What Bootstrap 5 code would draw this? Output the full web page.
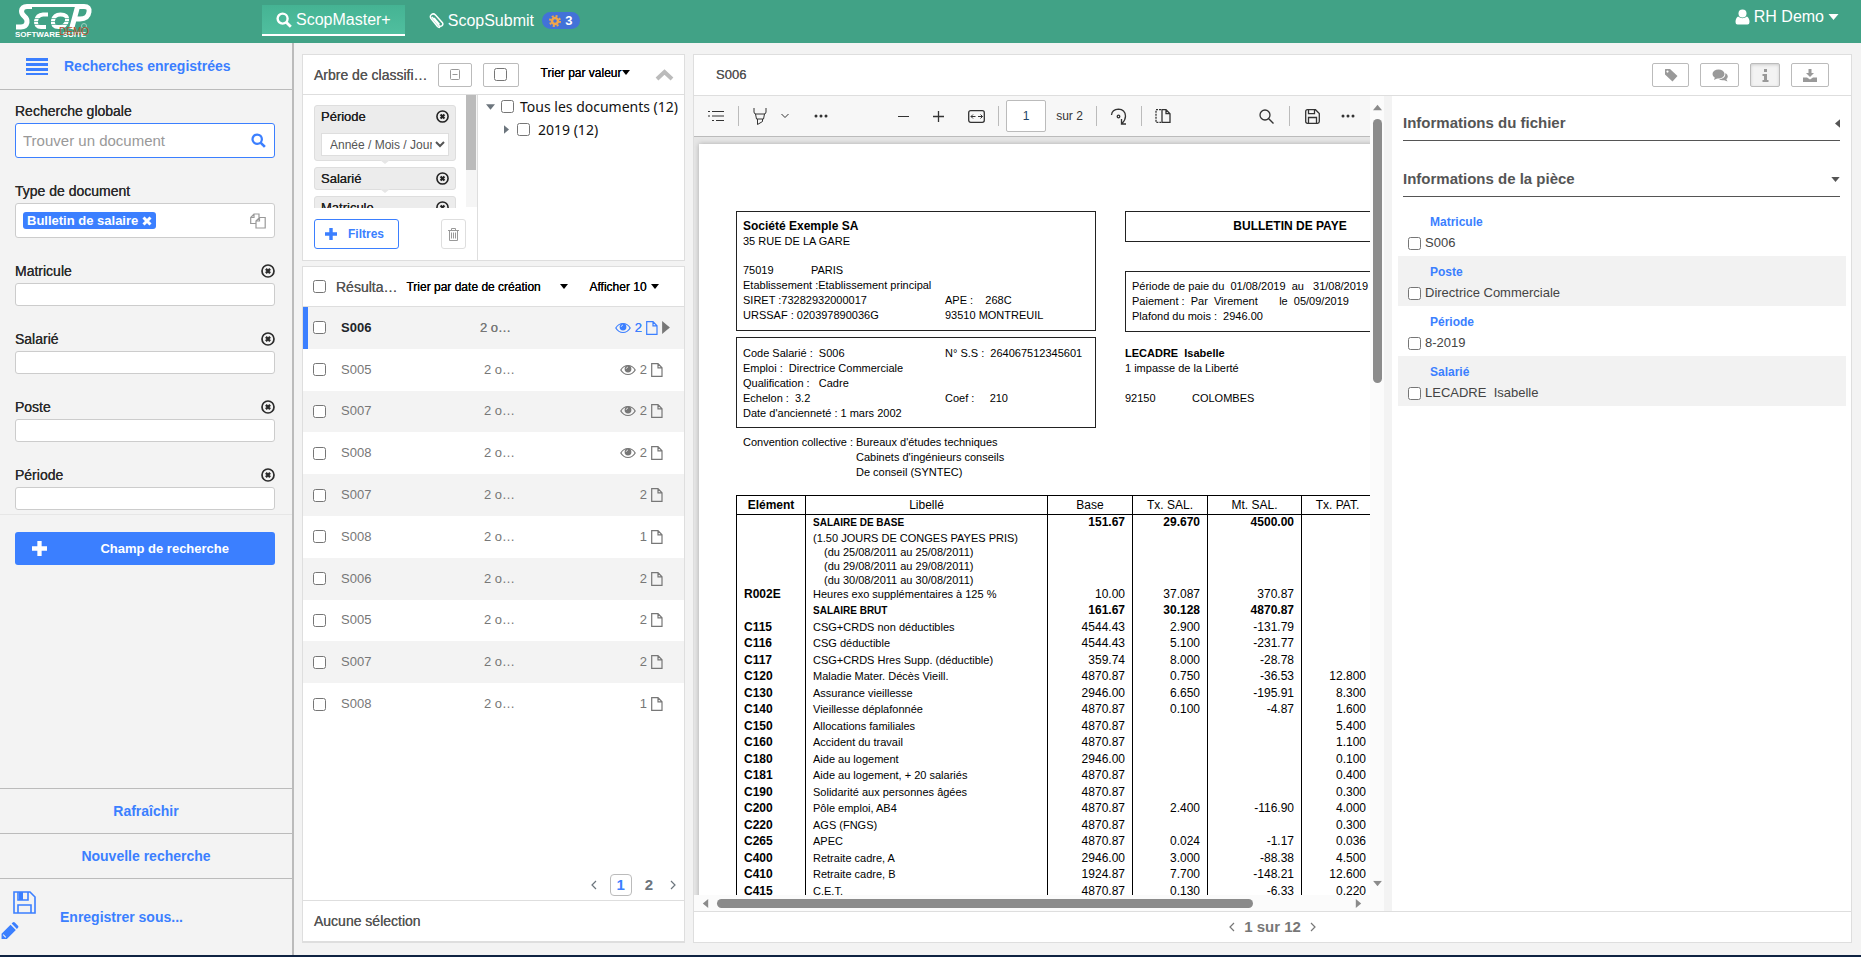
<!DOCTYPE html>
<html lang="fr">
<head>
<meta charset="utf-8">
<meta name="viewport" content="width=device-width, initial-scale=1">
<title>ScopMaster+</title>
<link href="https://cdn.jsdelivr.net/npm/bootstrap@5.3.0/dist/css/bootstrap.min.css" rel="stylesheet">
<style>
:root{--blue:#3b7fff;--line:#dedede;--side:#f3f3f3}
body{font-family:"Liberation Sans",Arial,sans-serif;font-size:14px;line-height:20px;color:#333;background:var(--side)}
svg{display:block;flex:none}
svg:not([fill]){fill:currentColor}
a{text-decoration:none;color:inherit}
.app{height:100vh;border-bottom:2px solid #0f2342}
.semi{text-shadow:0 0 0 currentColor}
.fs12{font-size:12px}.fs13{font-size:13px}.fs15{font-size:15px}.fs16{font-size:16px}
.blue{color:var(--blue)}
input[type=checkbox]{margin:0;width:13px;height:13px;flex:none}
.plain{background:none;border:0;padding:0;color:inherit}

/* top bar */
.topbar{background:#41a286;height:43px;color:#fff;padding:0 22px 0 14px}
.topbar .brand{width:248px}
.tab-on{background:linear-gradient(#45b393,#50bf9f);border-bottom:2px solid #fff;height:31px;padding:0 14px;margin-top:5px}
.tab-off{height:31px;margin-top:5px;padding:0 24px}
.count{background:#4272d8;border-radius:9px;height:17px;width:38px;font-size:13px}

/* sidebar */
.sidebar{width:294px;border-right:2px solid #bbb}
.side-head{height:47px;border-bottom:1px solid #bbb;padding-left:26px;gap:16px}
.side-body{padding:9px 17px 4px 15px;border-bottom:1px solid #e6e6e6}
.side-body .fld{border:1px solid #ccc;border-radius:3px;background:#fff;width:100%;padding:0 8px}
.fld.big{height:35px}
.side-body .fld.focus{border-color:var(--blue);padding-left:7px}
.fld input{border:0;outline:0;background:none;min-width:0;width:0;padding:0}
.fld input::placeholder{color:#999;opacity:1}
.side-body input.fld{height:23px;display:block;outline:0}
.lab{height:24px;line-height:24px;color:#2b2b2b}
.field-gap{margin-top:21px}
.tagx{background:var(--blue);color:#fff;border-radius:3px;height:17px;padding:0 4px;font-size:13px;font-weight:bold;margin-left:-1px;white-space:nowrap;flex:none}
.addfield{background:var(--blue);color:#fff;height:33px;border:0;border-radius:3px;margin:17px 17px 0 15px;padding:0 46px 0 17px;font-size:13px}
.side-act{height:45px;border:0;border-top:1px solid #bbb;background:none;color:var(--blue);font-weight:bold}
.side-save{height:77px;border-top:1px solid #bbb}

/* panels */
.panel{background:#fff;border:1px solid var(--line)}
.mid{width:383px}
.phead{height:40px;border-bottom:1px solid var(--line);color:#555}
.sqbtn{height:24px;border:1px solid #bbb;border-radius:2px;background:#fff;color:#999;padding:0;display:flex;align-items:center;justify-content:center;flex:none}
.sqbtn.on{background:#f3f3f3;box-shadow:inset 0 1px 3px #ccc}
.filters{width:175px;border-right:1px solid var(--line);height:165px;flex:none}
.fscroll{height:113px;overflow:hidden}
.fbox{position:relative;width:142px;background:#ececec;border:1px solid #dedede;border-radius:3px;padding:0 6px;color:#222;margin-bottom:6px}
.fbox:after{content:"";position:absolute;left:65px;top:100%;border:5px solid transparent;border-top:4px solid #e6e6e6;border-bottom:0}
.fbox .ttl{height:21px}
.fbox select{width:128px;height:23px;border:1px solid #dedede;background:#fff;color:#555;font-size:12px;padding:0 0 0 4px;margin:6px 0 4px;display:block}
.thumb{width:10px;height:75px;background:#bbb}
.track{width:11px;background:#f5f5f5;height:112px}
.filt{width:85px;height:30px;padding:0 14px 0 10px;--bs-btn-color:#3b7fff;--bs-btn-border-color:#3b7fff;border-radius:3px}
.trash{width:25px;height:30px;border-color:var(--line);border-radius:3px}
.tree{font-family:"Noto Sans",Tahoma,sans-serif;line-height:23px;color:#111;white-space:nowrap}
.results{height:418px;color:#777;font-size:13px}
.results td{padding:0;vertical-align:middle}
.results tr:nth-child(odd){background:var(--side)}
.results tr.sel td:first-child{box-shadow:inset 5px 0 var(--blue)}
.pg{width:22px;height:22px;border:1px solid #bbb;border-radius:4px;line-height:20px;text-align:center}

/* document viewer */
.pdf{min-width:0}
.ptool{height:41px;background:#f7f7f7;border-bottom:1px solid #bbb;color:#333}
.ptool .sep{width:1px;height:20px;background:#bbb}
.ptool input{width:40px;height:32px;border:1px solid #bbb;border-radius:2px;text-align:center;font-size:12px;color:#246;padding:0}
.ptool svg{fill:none;stroke:currentColor}
.canvas{background:#e6e6e6;padding:7px 0 0 5px;overflow:hidden;min-height:0}
.sheet{background:#fff;width:900px;min-height:900px;padding:67px 0 0 37px;box-shadow:0 0 5px #aaa;color:#000;font-size:11px;line-height:15px}
.sheet .cols{display:grid;grid-template-columns:360px 420px;column-gap:29px}
.bx{border:1px solid #222;padding:7px 6px 0;white-space:pre}
.two{display:grid;grid-template-columns:202px 1fr}
.pay{width:880px;table-layout:fixed;border:1px solid #000;border-bottom:0;font-size:12px;line-height:14px;margin-top:15px}
.pay td,.pay th{padding:0 7px;border-left:1px solid #000;vertical-align:top;text-align:right}
.pay thead tr{height:19px}
.pay thead th{border-bottom:1px solid #000;text-align:center;font-weight:normal;vertical-align:middle}
.pay tbody tr{height:16px}
.pay tbody tr:nth-child(even){height:17px}
.pay td:nth-child(1){text-align:left;font-weight:bold}
.pay td:nth-child(2){text-align:left;font-size:11px}
.pay td:nth-child(2) b{font-size:10px}
.vbar{width:14px;background:#fbfbfb;color:#8b8b8b;flex:none}
.vbar i,.hbar i{background:#8b8b8b;border-radius:5px;display:block}
.vbar i{width:9px;height:264px}
.hbar{height:16px;background:#fbfbfb;color:#8b8b8b;padding:0 22px 0 8px}
.hbar i{height:9px;width:85%}
.info{width:467px;border-left:8px solid var(--side);padding:5px 5px 0 6px}
.ihead{height:40px;border-bottom:1px solid #555;margin:0 6px 0 5px;padding-top:5px;color:#555;font-weight:bold;font-size:15px}
.irow{height:50px;padding:6px 10px 0}
.irow:nth-of-type(even){background:#f2f2f2}
.irow .k{padding-left:22px;font-size:12px;font-weight:bold;color:var(--blue)}
.irow label{font-size:13px;color:#444;height:22px;white-space:pre}
</style>
</head>
<body>
<svg width="0" height="0" class="position-absolute" aria-hidden="true">
<symbol id="x" viewBox="0 0 14 14"><circle cx="7" cy="7" r="6" fill="none" stroke="currentColor" stroke-width="1.7"/><path d="M4.9 4.9l4.2 4.2M9.1 4.9L4.9 9.1" stroke="currentColor" stroke-width="2.3"/></symbol>
<symbol id="mag" viewBox="0 0 16 16"><circle cx="6.6" cy="6.6" r="5" fill="none" stroke="currentColor" stroke-width="2.4"/><path d="M10.2 10.2l4.6 4.6" stroke="currentColor" stroke-width="2.8"/></symbol>
<symbol id="plus" viewBox="0 0 14 14"><path d="M5 0h4v5h5v4H9v5H5V9H0V5h5z"/></symbol>
<symbol id="eye" viewBox="0 0 16 12"><path d="M.8 6C2.6 3 5 1.500 8 1.500S13.400 3 15.200 6C13.400 9 11 10.500 8 10.500S2.600 9 .8 6z" fill="none" stroke="currentColor" stroke-width="1.200"/><circle cx="8" cy="5" r="3.400"/><path d="M6.300 4.800C6.300 3.800 7 3.200 8 3.200" fill="none" stroke="#fff" stroke-width=".8"/></symbol>
<symbol id="file" viewBox="0 0 12 14"><path d="M.7.700H7L11 4.800V13.300H.7zM7 .7V4.800H11" fill="none" stroke="currentColor" stroke-width="1.200"/></symbol>
<symbol id="down" viewBox="0 0 10 6"><path d="M0 0h10L5 6z"/></symbol>
<symbol id="right" viewBox="0 0 6 10"><path d="M0 0v10l6-5z"/></symbol>
<symbol id="left" viewBox="0 0 6 10"><path d="M6 0v10L0 5z"/></symbol>
<symbol id="lt" viewBox="0 0 6 10"><path d="M5 1L1 5l4 4" fill="none" stroke="currentColor" stroke-width="1.200"/></symbol>
<symbol id="gt" viewBox="0 0 6 10"><path d="M1 1l4 4-4 4" fill="none" stroke="currentColor" stroke-width="1.200"/></symbol>
</svg>

<div class="app d-flex flex-column overflow-hidden">
<header class="topbar d-flex align-items-start flex-shrink-0">
  <a href="#" class="brand" aria-label="Scop Software Suite">
    <svg width="80" height="40" viewBox="0 0 80 40" font-family="Liberation Sans" fill="none" stroke="#fff">
      <path d="M14 5.500H68" stroke-width="3"/>
      <path d="M18 6.500H13Q8 6.500 7.500 11 7.500 14 10.500 16.500 13.500 19 13 22.500 12 27 7 27H2" stroke-width="5"/>
      <path d="M34 14.500H29Q23 15 22 21 21.500 27 27 27H32M46.500 14.500Q54 14.500 53 20.500 52 27 44.500 27 38 27 39 20.500 40 14.500 46.500 14.500" stroke-width="4"/>
      <path d="M20 18.500h10M20 21.500h10M20 24.500h10M37 18.500h18M37 21.500h18M37 24.500h18" stroke="#41a286" stroke-width=".7"/>
      <path d="M64 5L57.500 29M61 6.500H70Q76 6.500 75 12 74 19 66 19H60" stroke-width="5"/>
      <circle cx="70" cy="26" r="2.500" stroke="#9fd0c2"/>
      <text x="1" y="37" font-size="8" font-weight="bold" fill="#fff" stroke="none">SOFTWARE SUITE</text>
      <text x="45" y="35" font-size="10" fill="#b5512f" stroke="none">DEMO</text>
    </svg>
  </a>
  <nav class="d-flex fs16">
    <a href="#" class="tab-on d-flex align-items-center gap-1"><svg width="16" height="16"><use href="#mag"/></svg>ScopMaster+</a>
    <a href="#" class="tab-off d-flex align-items-center gap-1">
      <svg width="15" height="16" viewBox="0 0 15 16" fill="none" stroke="#fff" stroke-width="1.500"><path d="M3 4l7 8.500q1.500 1.500 3 .2t.4-3L6.500 2Q4.500 0 2.500 1.500T2 5.500l6.500 8Q10 15 11 14M5 5l5.500 6.500"/></svg>
      ScopSubmit
      <span class="count d-flex align-items-center justify-content-center gap-1 fw-bold ms-1"><svg width="12" height="12" viewBox="0 0 12 12"><circle cx="6" cy="6" r="3" fill="none" stroke="#efa54a" stroke-width="2.500"/><circle cx="6" cy="6" r="5" fill="none" stroke="#efa54a" stroke-width="2" stroke-dasharray="2 1.930"/></svg>3</span>
    </a>
  </nav>
  <button class="plain ms-auto d-flex align-items-center gap-1 fs16" style="margin-top:7px">
    <svg width="15" height="16" viewBox="0 0 14 16"><circle cx="7" cy="4.500" r="4"/><path d="M2.500 7.500Q7 11 11.500 7.500 14 9 14 13q0 2.500-2 2.500H2q-2 0-2-2.500 0-4 2.500-5.500z"/></svg>
    RH Demo <svg width="11" height="6"><use href="#down"/></svg>
  </button>
</header>

<div class="d-flex flex-fill overflow-hidden">
<aside class="sidebar d-flex flex-column flex-shrink-0">
  <a href="#" class="side-head d-flex align-items-center blue fw-bold">
    <svg width="22" height="17" viewBox="0 0 22 17"><path d="M0 0h22v3H0zM0 5h22v3H0zM0 10h22v3H0zM0 15h22v2H0z"/></svg>Recherches enregistrées
  </a>
  <div class="side-body">
    <label class="lab semi d-block" for="q">Recherche globale</label>
    <div class="fld big focus d-flex align-items-center"><input id="q" class="flex-grow-1 fs15" placeholder="Trouver un document"><svg class="blue" width="15" height="15"><use href="#mag"/></svg></div>
    <label class="lab semi d-block field-gap" for="type">Type de document</label>
    <div class="fld big d-flex align-items-center"><span class="tagx d-flex align-items-center gap-1">Bulletin de salaire <svg width="10" height="10" viewBox="0 0 10 10"><path d="M1.500 1.500l7 7M8.500 1.500l-7 7" stroke="#fff" stroke-width="3"/></svg></span><input id="type" class="flex-grow-1"><svg width="16" height="16" viewBox="0 0 16 16" fill="none" stroke="#999" stroke-width="1.200"><path d="M6 10.500H.7V4.500L4 1h5v3.500M4 1v3.500H.7M6 8l3.500-3.500h5.700v10.500H6zM9.500 4.500V8H6"/></svg></div>
    <div class="field-gap d-flex justify-content-between lab semi"><label for="f1">Matricule</label><button class="plain" aria-label="Retirer Matricule"><svg width="14" height="14"><use href="#x"/></svg></button></div>
    <input id="f1" class="fld">
    <div class="field-gap d-flex justify-content-between lab semi"><label for="f2">Salarié</label><button class="plain" aria-label="Retirer Salarié"><svg width="14" height="14"><use href="#x"/></svg></button></div>
    <input id="f2" class="fld">
    <div class="field-gap d-flex justify-content-between lab semi"><label for="f3">Poste</label><button class="plain" aria-label="Retirer Poste"><svg width="14" height="14"><use href="#x"/></svg></button></div>
    <input id="f3" class="fld">
    <div class="field-gap d-flex justify-content-between lab semi"><label for="f4">Période</label><button class="plain" aria-label="Retirer Période"><svg width="14" height="14"><use href="#x"/></svg></button></div>
    <input id="f4" class="fld">
  </div>
  <button class="addfield d-flex align-items-center justify-content-between fw-bold"><svg width="15" height="15"><use href="#plus"/></svg>Champ de recherche</button>
  <button class="side-act mt-auto">Rafraîchir</button>
  <button class="side-act">Nouvelle recherche</button>
  <a href="#" class="side-save d-flex align-items-center blue fw-bold">
    <span class="d-block align-self-start pt-2">
      <svg class="mt-1" style="margin-left:13px" width="23" height="23" viewBox="0 0 23 23"><path d="M1 1h16l5 5v16H1zM5 22v-8h13v8M5 1v8h10V1" fill="none" stroke="currentColor" stroke-width="1.600"/><path d="M6 1h4v8H6z"/></svg>
      <svg class="mt-2" width="19" height="18" viewBox="0 0 17 17"><path d="M1 11L9.500 2.500l5 5L6 16H1zM10.500 1.500l1-1q1-.8 2 0l3 3q.8 1 0 2l-1 1z"/><path d="M2.500 12l2.500 2.500" stroke="#f3f3f3"/></svg>
    </span>
    <span class="ps-4">Enregistrer sous...</span>
  </a>
</aside>

<main class="d-flex flex-grow-1 overflow-hidden" style="padding:11px 9px 12px 8px;gap:8px">
<section class="mid d-flex flex-column flex-shrink-0">
  <div class="panel">
    <div class="phead d-flex align-items-center">
      <span class="semi" style="padding-left:11px">Arbre de classifi…</span>
      <button class="sqbtn" style="width:34px;margin-left:10px" aria-label="Réduire"><svg width="10" height="11" viewBox="0 0 10 11" fill="none" stroke="#999"><rect x=".5" y=".5" width="9" height="10" rx="1"/><path d="M2.500 5.500h5"/></svg></button>
      <span class="sqbtn" style="width:36px;margin-left:11px"><input type="checkbox" aria-label="Tout cocher"></span>
      <button class="plain text-black semi fs12 d-flex align-items-center" style="margin:-4px 0 0 22px">Trier par valeur<svg width="8" height="5" viewBox="0 0 10 6"><use href="#down"/></svg></button>
      <button class="plain ms-auto" style="margin-right:10px" aria-label="Replier"><svg width="19" height="12" viewBox="0 0 19 12" fill="none" stroke="#bbb" stroke-width="4"><path d="M2 10l7.500-7L17 10"/></svg></button>
    </div>
    <div class="d-flex">
      <div class="filters">
        <div class="fscroll d-flex justify-content-between">
          <div style="padding:10px 0 0 11px">
            <div class="fbox"><div class="ttl fs13 semi d-flex align-items-center justify-content-between"><label for="per">Période</label><svg width="13" height="13"><use href="#x"/></svg></div>
              <select id="per"><option>Année / Mois / Jour</option></select></div>
            <div class="fbox"><div class="ttl fs13 semi d-flex align-items-center justify-content-between">Salarié<svg width="13" height="13"><use href="#x"/></svg></div></div>
            <div class="fbox"><div class="ttl fs13 semi d-flex align-items-center justify-content-between">Matricule<svg width="13" height="13"><use href="#x"/></svg></div></div>
          </div>
          <div class="track"><div class="thumb"></div></div>
        </div>
        <div class="d-flex justify-content-between" style="padding:11px 11px 0">
          <button class="btn btn-sm btn-outline-primary fs12 fw-bold d-flex align-items-center justify-content-between filt"><svg width="12" height="12"><use href="#plus"/></svg>Filtres</button>
          <button class="sqbtn trash" aria-label="Supprimer"><svg width="11" height="13" viewBox="0 0 11 13" fill="none" stroke="#999"><path d="M0 2.500h11M3.500 2.500V.5h4v2M1.500 2.500v10h8v-10M3.500 4.500v6M5.500 4.500v6M7.500 4.500v6"/></svg></button>
        </div>
      </div>
      <div class="tree">
        <div class="d-flex align-items-center" style="gap:6px;padding-left:8px"><svg width="9" height="6" class="text-secondary"><use href="#down"/></svg><input type="checkbox" id="t1"><label for="t1">Tous les documents (12)</label></div>
        <div class="d-flex align-items-center" style="gap:8px;padding-left:26px"><svg width="5" height="9" class="text-secondary"><use href="#right"/></svg><input type="checkbox" id="t2"><label for="t2">2019 (12)</label></div>
      </div>
    </div>
  </div>

  <div class="panel flex-grow-1 d-flex flex-column" style="margin-top:5px;border-bottom-width:2px">
    <div class="phead d-flex align-items-center" style="padding-left:10px">
      <input type="checkbox" aria-label="Tout sélectionner"><span class="semi" style="margin:0 9px 0 10px">Résulta…</span>
      <button class="plain text-black semi fs12 d-flex align-items-center justify-content-between" style="width:162px">Trier par date de création<svg width="8" height="5" viewBox="0 0 10 6"><use href="#down"/></svg></button>
      <button class="plain text-black semi fs12 d-flex align-items-center gap-1" style="margin-left:21px">Afficher 10<svg width="8" height="5" viewBox="0 0 10 6"><use href="#down"/></svg></button>
    </div>
    <table class="results w-100">
      <colgroup><col style="width:38px"><col style="width:139px"><col style="width:90px"><col></colgroup>
      <tbody id="res"></tbody>
    </table>
    <div class="mt-auto d-flex align-items-center justify-content-end fw-bold text-secondary pb-1 pe-2" style="gap:13px">
      <svg width="6" height="10"><use href="#lt"/></svg><a href="#" class="pg blue fs15">1</a><a href="#" class="fs15">2</a><svg class="ms-1" width="6" height="10"><use href="#gt"/></svg>
    </div>
    <div class="d-flex align-items-center semi" style="height:41px;border-top:1px solid var(--line);padding-left:11px;color:#555">Aucune sélection</div>
  </div>
</section>

<section class="panel flex-grow-1 d-flex flex-column overflow-hidden">
  <div class="phead d-flex align-items-center flex-shrink-0" style="padding:0 22px;height:41px">
    <span class="semi fs13">S006</span>
    <div class="ms-auto d-flex" style="gap:11px">
      <button class="sqbtn" style="width:37px" aria-label="Étiquette"><svg width="14" height="14" viewBox="0 0 14 14"><path fill-rule="evenodd" d="M1 1.500Q1 1 1.500 1H6l7.500 7-5 5.500L1 6.500zM3.500 2.500a1.100 1.100 0 100 2.200 1.100 1.100 0 000-2.200z"/></svg></button>
      <button class="sqbtn" style="width:39px" aria-label="Commentaires"><svg width="16" height="13" viewBox="0 0 16 13"><ellipse cx="6.500" cy="5" rx="6" ry="4.500"/><path d="M3 8l-1 3 4-2zM13.500 4q2.500 1.500 2.300 3.500-.3 2-1.500 2.500l1.200 2.500-3.200-1.300Q9 11.800 7 10.300q6.500-.5 6.500-6.300z"/></svg></button>
      <button class="sqbtn on" style="width:30px" aria-label="Informations"><svg width="7" height="13" viewBox="0 0 7 13"><path d="M2 0h3v3H2zM.5 5H5v6h1.500v2H.5v-2H2V7H.5z"/></svg></button>
      <button class="sqbtn" style="width:38px" aria-label="Télécharger"><svg width="14" height="13" viewBox="0 0 14 13"><path d="M5.500 0h3v4H11L7 8 3 4h2.500zM0 8.500h4l3 2 3-2h4V13H0z"/></svg></button>
    </div>
  </div>
  <div class="d-flex flex-grow-1" style="min-height:0">
    <div class="pdf d-flex flex-column flex-grow-1">
      <div class="d-flex flex-grow-1" style="min-height:0">
        <div class="d-flex flex-column flex-grow-1" style="min-width:0">
          <div class="ptool d-flex align-items-center justify-content-between flex-shrink-0" style="padding:0 15px 0 14px">
            <div class="d-flex align-items-center" style="gap:14px">
              <svg width="16" height="12" viewBox="0 0 16 12" stroke-width="1.200"><path d="M0 1.500h2M4 1.500h12M0 6h2M4 6h12M4 10.500h2M8 10.500h8"/></svg><span class="sep"></span>
              <svg width="14" height="17" viewBox="0 0 14 17"><path d="M1 0v4q0 2 2 2h8q2 0 2-2V0M2.500 6l1 5h7l1-5M4.500 11v5.500l5-3V11"/></svg>
              <svg width="8" height="6" viewBox="0 0 8 6"><path d="M.5 1L4 4.500 7.500 1"/></svg>
              <svg style="margin-left:11px" width="14" height="4" viewBox="0 0 14 4" stroke-width="3" stroke-linecap="round"><path d="M2 2h0M7 2h0M12 2h0"/></svg>
            </div>
            <div class="d-flex align-items-center" style="gap:13px;margin-right:18px">
              <svg width="11" height="11" viewBox="0 0 11 11"><path d="M0 5.500h11"/></svg>
              <svg style="margin:0 11px" width="11" height="11" viewBox="0 0 11 11" stroke-width="1.300"><path d="M0 5.500h11M5.500 0v11"/></svg>
              <svg width="17" height="13" viewBox="0 0 17 13"><rect x=".7" y=".7" width="15.600" height="11.600" rx="2" stroke-width="1.300"/><path d="M3 6.500h4.500M10 6.500h4.500M5 4.500l-2 2 2 2M12.500 4.500l2 2-2 2"/></svg>
              <span class="sep"></span><div class="d-flex align-items-center" style="gap:10px;margin-left:-6px"><input value="1" aria-label="Page"><span class="fs12">sur 2</span></div><span class="sep"></span>
              <svg width="18" height="17" viewBox="0 0 18 17" stroke-width="1.300"><path d="M1.500 7Q2 1.500 8.500 1.200 15 1.500 15.500 8q0 4-3.500 7.500M11.500 11v5h4.500"/><circle cx="8.500" cy="8.500" r="1.300"/></svg><span class="sep"></span>
              <svg width="16" height="14" viewBox="0 0 16 14" stroke-width="1.300"><path d="M6 .7H1v12.600h5" stroke-dasharray="2 1"/><path d="M7 .7h4l4 4v8.600H7zM11 .7v4h4"/></svg>
            </div>
            <div class="d-flex align-items-center" style="gap:15px">
              <svg width="15" height="15" viewBox="0 0 15 15" stroke-width="1.300"><circle cx="6" cy="6" r="5"/><path d="M9.500 9.500l5 5"/></svg><span class="sep"></span>
              <svg width="15" height="15" viewBox="0 0 15 15" stroke-width="1.300"><path d="M2.500.7h8l3.800 3.800v8q0 1.800-1.800 1.800h-10Q.7 14.300.7 12.500v-10Q.7.700 2.500.7zM3.500.7v4h6v-4M3.500 14V8.500h8V14"/></svg>
              <svg style="margin-left:6px" width="14" height="4" viewBox="0 0 14 4" stroke-width="3" stroke-linecap="round"><path d="M2 2h0M7 2h0M12 2h0"/></svg>
            </div>
          </div>
          <div class="canvas flex-grow-1">
            <div class="sheet">
              <div class="cols">
                <div>
                  <div class="bx" style="height:120px"><div class="fs12 fw-bold">Société Exemple SA</div><div style="height:29px">35 RUE DE LA GARE</div><div class="d-flex"><span style="width:68px">75019</span>PARIS</div><div>Etablissement :Etablissement principal</div><div class="two"><span>SIRET :73282932000017</span><span>APE :    268C</span><span>URSSAF : 020397890036G</span><span>93510 MONTREUIL</span></div></div>
                  <div class="bx" style="height:91px;margin-top:6px;padding-top:8px"><div class="two"><span>Code Salarié :  S006</span><span>N° S.S :  264067512345601</span><span>Emploi :  Directrice Commerciale</span><span></span><span>Qualification :   Cadre</span><span></span><span>Echelon :  3.2</span><span>Coef :     210</span><span>Date d'ancienneté : 1 mars 2002</span></div></div>
                  <div class="d-flex" style="padding:7px 7px 0"><span style="width:113px">Convention collective :</span><span>Bureaux d'études techniques<br>Cabinets d'ingénieurs conseils<br>De conseil (SYNTEC)</span></div>
                </div>
                <div>
                  <div class="bx fs12 fw-bold text-center" style="height:31px;padding-right:96px">BULLETIN DE PAYE</div>
                  <div class="bx" style="height:61px;margin-top:29px">Période de paie du  01/08/2019  au   31/08/2019
Paiement :  Par  Virement       le  05/09/2019
Plafond du mois :  2946.00</div>
                  <div style="padding-top:14px;white-space:pre"><b>LECADRE  Isabelle</b>
1 impasse de la Liberté

<span class="d-inline-block" style="width:67px">92150</span>COLOMBES</div>
                </div>
              </div>
              <table class="pay">
                <colgroup><col style="width:69px"><col style="width:242px"><col style="width:85px"><col style="width:75px"><col style="width:94px"><col style="width:72px"><col></colgroup>
                <thead><tr><th class="fw-bold">Elément</th><th>Libellé</th><th>Base</th><th>Tx. SAL.</th><th>Mt. SAL.</th><th class="text-nowrap px-0">Tx. PAT.</th><th></th></tr></thead>
                <tbody id="pay"></tbody>
              </table>
            </div>
          </div>
        </div>
        <div class="vbar d-flex flex-column align-items-center" style="padding:8px 0"><svg width="9" height="7" viewBox="0 0 10 6"><path d="M0 6h10L5 0z"/></svg><i style="margin-top:8px"></i><svg class="mt-auto" width="9" height="7" viewBox="0 0 10 6"><use href="#down"/></svg></div>
      </div>
      <div class="hbar d-flex align-items-center flex-shrink-0"><svg width="7" height="9"><use href="#left"/></svg><div class="flex-grow-1 px-2"><i></i></div><svg width="7" height="9"><use href="#right"/></svg></div>
    </div>
    <div class="info flex-shrink-0">
      <div class="ihead d-flex align-items-center justify-content-between">Informations du fichier<svg width="5" height="9"><use href="#left"/></svg></div>
      <div class="ihead d-flex align-items-center justify-content-between" style="margin-top:16px;margin-bottom:9px">Informations de la pièce<svg width="9" height="5"><use href="#down"/></svg></div>
      <section>
        <div class="irow"><div class="k">Matricule</div><label class="d-flex align-items-center gap-1"><input type="checkbox">S006</label></div>
        <div class="irow"><div class="k">Poste</div><label class="d-flex align-items-center gap-1"><input type="checkbox">Directrice Commerciale</label></div>
        <div class="irow"><div class="k">Période</div><label class="d-flex align-items-center gap-1"><input type="checkbox">8-2019</label></div>
        <div class="irow"><div class="k">Salarié</div><label class="d-flex align-items-center gap-1"><input type="checkbox">LECADRE  Isabelle</label></div>
      </section>
    </div>
  </div>
  <div class="d-flex align-items-center justify-content-center fw-bold fs15 flex-shrink-0" style="height:31px;border-top:1px solid var(--line);color:#777;gap:9px"><svg width="6" height="10"><use href="#lt"/></svg>1 sur 12<svg width="6" height="10"><use href="#gt"/></svg></div>
</section>
</main>
</div>
</div>

<script>
const docs=[["S006",2,1],["S005",2,1],["S007",2,1],["S008",2,1],["S007",2,0],["S008",1,0],["S006",2,0],["S005",2,0],["S007",2,0],["S008",1,0]];
document.getElementById("res").innerHTML=docs.map(([n,p,seen],i)=>{
  const s=i===0;
  return `<tr class="${s?"sel":""}"><td><input type="checkbox" class="d-block" style="margin-left:10px" aria-label="${n}"></td>
  <td class="${s?"fw-bold text-dark":""}">${n}</td><td class="${s?"semi":"ps-1"}">2 o…</td>
  <td><div class="d-flex align-items-center justify-content-end gap-1" style="padding-right:${s?14:21}px">
  ${seen?`<svg class="${s?"blue":""}" width="16" height="12"><use href="#eye"/></svg>`:""}<span class="${s?"blue semi":""}">${p}</span><svg class="${s?"blue":""}" width="12" height="14"><use href="#file"/></svg>${s?'<svg width="8" height="13" viewBox="0 0 6 10"><use href="#right"/></svg>':""}</div></td></tr>`}).join("");
const lines=[["","<b>SALAIRE DE BASE</b>","<b>151.67","<b>29.670","<b>4500.00",""],
["","(1.50 JOURS DE CONGES PAYES PRIS)<br>&emsp;(du 25/08/2011 au 25/08/2011)<br>&emsp;(du 29/08/2011 au 29/08/2011)<br>&emsp;(du 30/08/2011 au 30/08/2011)"],
["R002E","Heures exo supplémentaires à 125 %","10.00","37.087","370.87"],
["","<b>SALAIRE BRUT</b>","<b>161.67","<b>30.128","<b>4870.87"],
["C115","CSG+CRDS non déductibles","4544.43","2.900","-131.79"],
["C116","CSG déductible","4544.43","5.100","-231.77"],
["C117","CSG+CRDS Hres Supp. (déductible)","359.74","8.000","-28.78"],
["C120","Maladie Mater. Décès Vieill.","4870.87","0.750","-36.53","12.800"],
["C130","Assurance vieillesse","2946.00","6.650","-195.91","8.300"],
["C140","Vieillesse déplafonnée","4870.87","0.100","-4.87","1.600"],
["C150","Allocations familiales","4870.87","","","5.400"],
["C160","Accident du travail","4870.87","","","1.100"],
["C180","Aide au logement","2946.00","","","0.100"],
["C181","Aide au logement, + 20 salariés","4870.87","","","0.400"],
["C190","Solidarité aux personnes âgées","4870.87","","","0.300"],
["C200","Pôle emploi, AB4","4870.87","2.400","-116.90","4.000"],
["C220","AGS (FNGS)","4870.87","","","0.300"],
["C265","APEC","4870.87","0.024","-1.17","0.036"],
["C400","Retraite cadre, A","2946.00","3.000","-88.38","4.500"],
["C410","Retraite cadre, B","1924.87","7.700","-148.21","12.600"],
["C415","C.E.T.","4870.87","0.130","-6.33","0.220"]];
document.getElementById("pay").innerHTML=lines.map(r=>"<tr>"+[0,1,2,3,4,5,6].map(i=>"<td>"+(r[i]||"")+"</td>").join("")+"</tr>").join("");
</script>
<script src="https://cdn.jsdelivr.net/npm/bootstrap@5.3.0/dist/js/bootstrap.bundle.min.js"></script>
</body>
</html>
